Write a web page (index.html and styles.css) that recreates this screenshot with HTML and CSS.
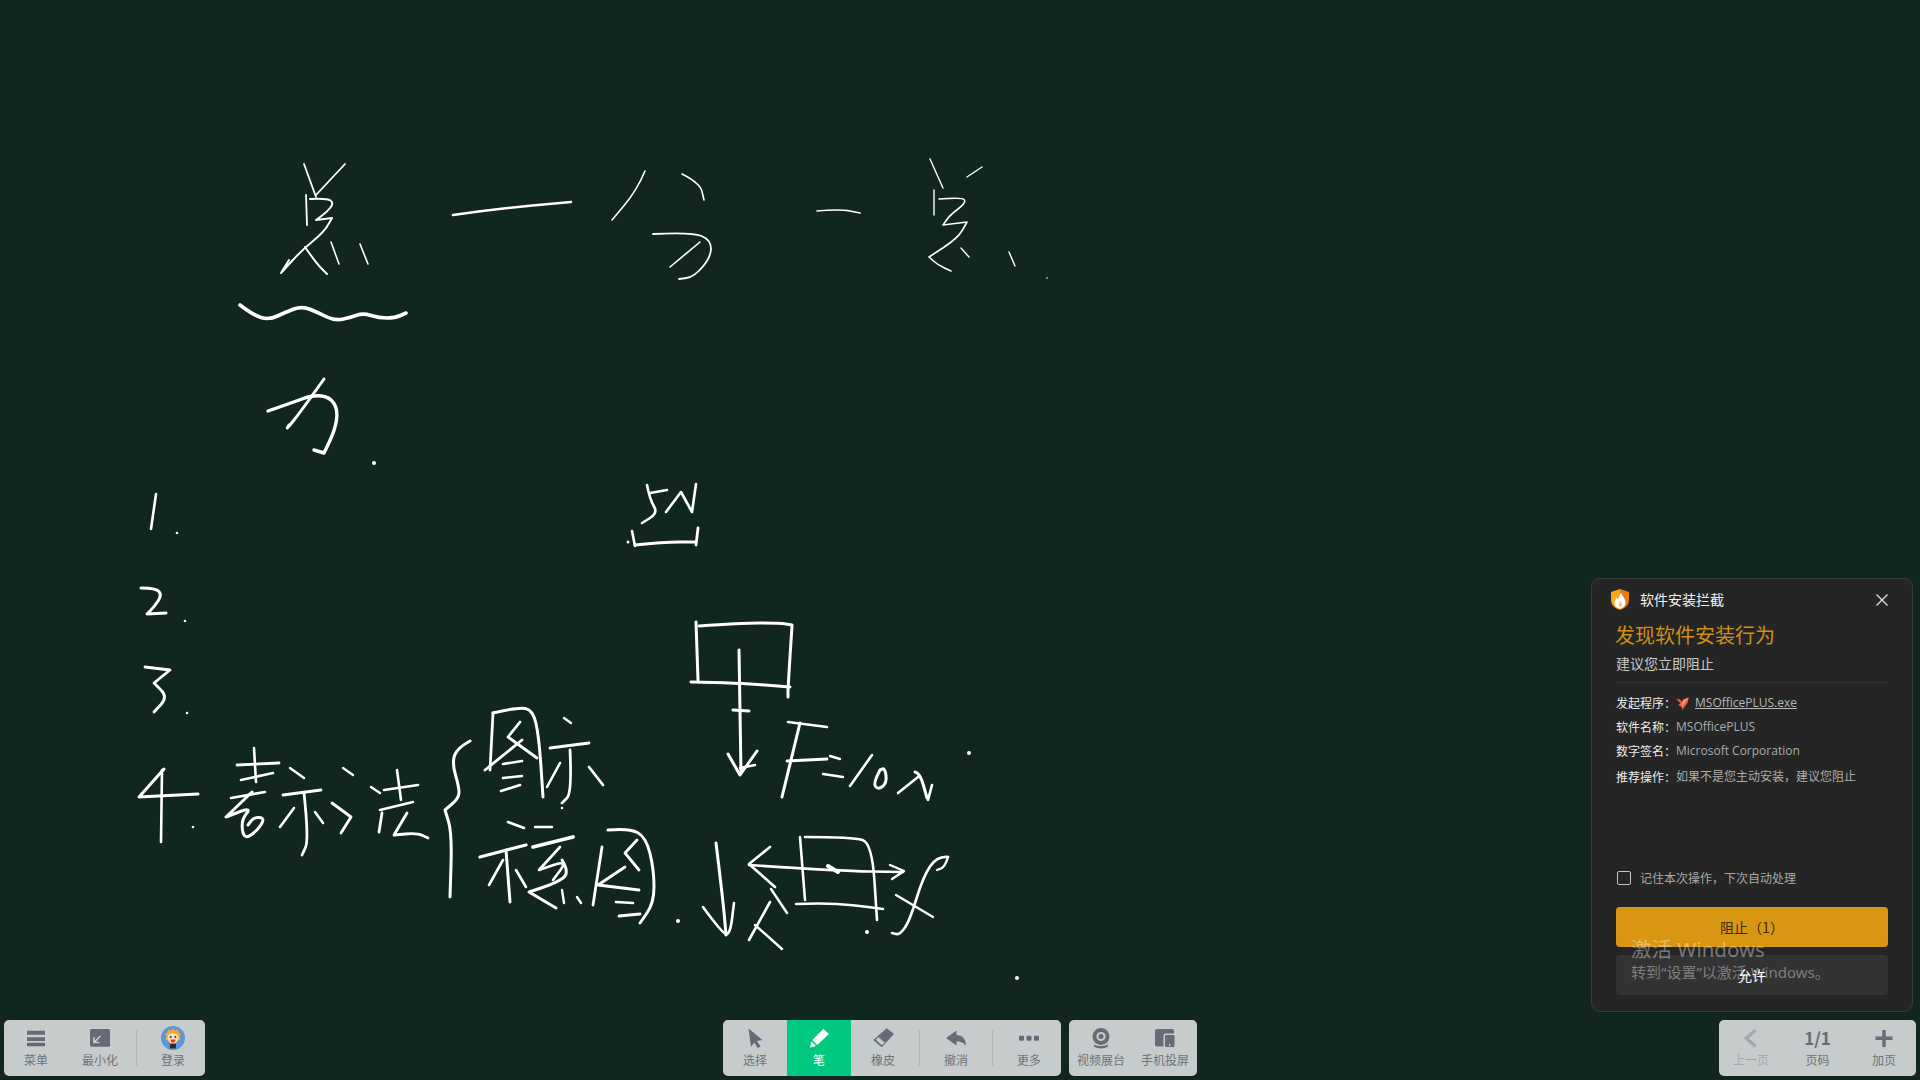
FILE: index.html
```html
<!DOCTYPE html>
<html lang="zh-CN">
<head>
    <meta charset="UTF-8">
    <title>白板</title>
    <link rel="stylesheet" href="styles.css">
</head>
<body>
    <main class="stage">
        <svg id="ink" class="ink" viewBox="0 0 1920 1024" width="1920" height="1024"></svg>

        <section class="popup">
            <div class="popup-head">
                <svg class="shield" viewBox="0 0 18 21" width="18" height="21">
                    <path d="M0 3 L9 0 V21 C4 19.500 0 16 0 11Z" fill="#f9a61a"/>
                    <path d="M18 3 L9 0 V21 C14 19.500 18 16 18 11Z" fill="#e57c0d"/>
                    <path d="M10 3.500 C11 7 14.500 9 14.500 13.500 C14.500 17 12 19.500 9 19.500 C6 19.500 3.500 17 3.500 13.800 C3.500 11.500 5 10 5.800 8.500 C6.400 9.500 6.800 10 7.300 10.300 C8 8 8.800 6 10 3.500Z" fill="#fff"/>
                    <path d="M9.500 12 C10.500 14 11.500 15 11 16.800 C10.500 18 8 18 7.500 16.500 C7.200 15 8.500 14 9.500 12Z" fill="#f9c98a"/>
                </svg>
                <span class="popup-title">软件安装拦截</span>
                <svg class="close" viewBox="0 0 12 12" width="12" height="12">
                    <path d="M0.500 0.500 L11.500 11.500 M11.500 0.500 L0.500 11.500" stroke="#e8e8e8" stroke-width="1.200" fill="none"/>
                </svg>
            </div>
            <h1 class="popup-heading">发现软件安装行为</h1>
            <p class="popup-sub">建议您立即阻止</p>
            <div class="info">
                <div class="info-row">
                    <span class="info-key">发起程序：</span>
                    <svg class="app-icon" viewBox="0 0 13 13" width="13" height="13">
                        <path d="M0 1.500 L4 2.500 L6 5 L7.500 2.500 L12.800 0.500 L11.500 6 L8.500 10 L6.500 13 L5.500 9.800 L2 8 L4.500 6.500Z" fill="#ee5b3f"/>
                        <path d="M6 5 L7.500 2.500 L12.800 0.500 L8.500 7 L5.500 9.800Z" fill="#f98a63"/>
                    </svg>
                    <a class="info-link">MSOfficePLUS.exe</a>
                </div>
                <div class="info-row"><span class="info-key">软件名称：</span><span class="info-val">MSOfficePLUS</span></div>
                <div class="info-row"><span class="info-key">数字签名：</span><span class="info-val">Microsoft Corporation</span></div>
                <div class="info-row info-last"><span class="info-key">推荐操作：</span><span class="info-val">如果不是您主动安装，建议您阻止</span></div>
            </div>
            <label class="remember"><span class="check"></span>记住本次操作，下次自动处理</label>
            <div class="btn btn-block">阻止（1）</div>
            <div class="btn btn-allow">允许</div>
        </section>

        <div class="watermark">
            <div class="wm-big">激活 Windows</div>
            <div class="wm-small">转到“设置”以激活 Windows。</div>
        </div>
    </main>

    <footer class="toolbar">
        <div class="tool-left">
            <div class="group">
                <div class="tool">
                    <svg class="icon" viewBox="0 0 24 24"><path d="M3 4.700h18v4H3zM3 11.300h18v3.700H3zM3 16.800h18v3.400H3z"/></svg>
                    <span>菜单</span>
                </div>
                <div class="tool">
                    <svg class="icon" viewBox="0 0 24 24">
                        <rect x="2" y="3" width="20" height="17.700" rx="1.500"/>
                        <path class="cut" d="M12.500 10 L6 16.500 M6 11.200 V16.500 H11.300"/>
                    </svg>
                    <span>最小化</span>
                </div>
                <i class="sep"></i>
                <div class="tool">
                    <svg class="icon" viewBox="0 0 24 24">
                        <circle cx="12" cy="12" r="12" fill="#5b96db"/>
                        <path d="M12 2 L14 4.500 L17 3.500 L17.500 6.500 L20 8 L18.500 10.500 L20 13.500 L17 14.500 L15 17 H9 L7 14.500 L4 13.500 L5.500 10.500 L4 8 L6.500 6.500 L7 3.500 L10 4.500Z" fill="#f6a435"/>
                        <ellipse cx="12" cy="12" rx="5.500" ry="4.800" fill="#fde3c0"/>
                        <circle cx="9.700" cy="11" r="1" fill="#3a2a20"/>
                        <circle cx="14.300" cy="11" r="1" fill="#3a2a20"/>
                        <path d="M9.500 13.500h5c0 2-1.200 3-2.500 3s-2.500-1-2.500-3z" fill="#d3392f"/>
                        <path d="M9 18h6v4.500H9z" fill="#2e2a2a"/>
                    </svg>
                    <span>登录</span>
                </div>
            </div>
        </div>

        <div class="tool-center">
            <div class="group">
                <div class="tool">
                    <svg class="icon" viewBox="0 0 24 24"><path d="M5.500 2.500 L19.500 14 L14 15 L17.500 20.500 L14.800 22 L11.200 16.500 L8 21Z"/></svg>
                    <span>选择</span>
                </div>
                <div class="tool tool-on">
                    <svg class="icon" viewBox="0 0 24 24"><path d="M16.300 3 L22 8 L10.300 19 L5.300 14ZM4.500 15.500 L9 20 L3 21.500Z"/></svg>
                    <span>笔</span>
                </div>
                <div class="tool">
                    <svg class="icon" viewBox="0 0 24 24">
                        <path d="M15.700 2.300 L23 8 L10.700 21.300 L2.300 14Z"/>
                        <path class="fill-bar" d="M4.700 13.800 L7.300 11 L14 16.700 L10.800 19.300Z"/>
                    </svg>
                    <span>橡皮</span>
                </div>
                <i class="sep"></i>
                <div class="tool">
                    <svg class="icon" viewBox="0 0 24 24"><path d="M2 12 L12.500 4.500 V9 C18 9 22 13 22 19.500 C19 16.500 16 15.300 12.500 15.300 V19.500Z"/></svg>
                    <span>撤消</span>
                </div>
                <i class="sep"></i>
                <div class="tool">
                    <svg class="icon" viewBox="0 0 24 24">
                        <rect x="2" y="9.700" width="5" height="5" rx="1"/>
                        <rect x="9.500" y="9.700" width="5" height="5" rx="1"/>
                        <rect x="17" y="9.700" width="5" height="5" rx="1"/>
                    </svg>
                    <span>更多</span>
                </div>
            </div>
            <div class="group">
                <div class="tool">
                    <svg class="icon" viewBox="0 0 24 24">
                        <circle cx="12" cy="10.500" r="8.500"/>
                        <circle class="fill-bar" cx="12" cy="10.500" r="4.600"/>
                        <circle cx="12" cy="10.500" r="2.500"/>
                        <path d="M5 18.500 C9 20.500 15 20.500 19 18.500 V20.500 C15 23 9 23 5 20.500Z"/>
                    </svg>
                    <span>视频展台</span>
                </div>
                <div class="tool">
                    <svg class="icon" viewBox="0 0 24 24">
                        <rect x="2" y="3" width="19" height="17.500" rx="2"/>
                        <rect class="fill-bar" x="10.500" y="7.500" width="12.500" height="14.500" rx="2"/>
                        <rect x="12" y="9" width="9.500" height="12" rx="1"/>
                        <circle cx="16.700" cy="19" r="0.800" fill="#fff"/>
                    </svg>
                    <span>手机投屏</span>
                </div>
            </div>
        </div>

        <div class="tool-right">
            <div class="group group-pages">
                <div class="tool tool-off">
                    <svg class="icon" viewBox="0 0 24 24"><path class="line" d="M16.500 4 L7.500 12.300 L16.500 20.500"/></svg>
                    <span>上一页</span>
                </div>
                <div class="tool">
                    <b class="pages">1/1</b>
                    <span>页码</span>
                </div>
                <div class="tool">
                    <svg class="icon" viewBox="0 0 24 24"><path class="line" d="M3.500 12.300 H20.500 M12 4 V21"/></svg>
                    <span>加页</span>
                </div>
            </div>
        </div>
    </footer>

    <script src="script.js"></script>
</body>
</html>
```

FILE: styles.css
```css
* {
    box-sizing: border-box;
}

body {
    margin: 0;
    width: 1920px;
    height: 1080px;
    overflow: hidden;
    display: flex;
    flex-direction: column;
    background-color: #11261f;
    font-family: "Noto Sans CJK SC", "Noto Sans", sans-serif;
}

.stage {
    position: relative;
    flex: 1;
}

.ink {
    position: absolute;
    left: 0;
    top: 0;
}

/* toolbar */
.toolbar {
    display: grid;
    grid-template-columns: 1fr auto 1fr;
    padding: 0 4px 4px;
}

.tool-left {
    display: flex;
    justify-content: flex-start;
}

.tool-center {
    display: flex;
    gap: 8px;
}

.tool-right {
    display: flex;
    justify-content: flex-end;
}

.group {
    display: flex;
    align-items: center;
    height: 56px;
    background-color: #c5cccb;
    border-radius: 5px;
    overflow: hidden;
}

.group-pages {
    width: 197px;
    justify-content: space-between;
}

.tool {
    width: 64px;
    height: 56px;
    padding-top: 6px;
    display: flex;
    flex-direction: column;
    align-items: center;
    font-size: 12px;
    line-height: 16px;
    color: #6f727c;
}

.tool-on {
    background-color: #00c97f;
    color: #fff;
}

.tool-on .icon {
    fill: #fff;
}

.tool-off {
    color: #a4a8ad;
}

.icon {
    width: 24px;
    height: 24px;
    margin-bottom: 2px;
    fill: #686a78;
    flex: none;
}

.cut {
    fill: none;
    stroke: #c5cccb;
    stroke-width: 1.700;
}

.fill-bar {
    fill: #c5cccb;
}

.line {
    fill: none;
    stroke: #686a78;
    stroke-width: 3.500;
}

.tool-off .line {
    stroke: #a4a8ad;
}

.pages {
    height: 24px;
    margin-bottom: 2px;
    font-size: 17px;
    line-height: 24px;
    color: #686a78;
}

.sep {
    width: 1px;
    height: 36px;
    margin: 0 4px;
    background-color: #aeb4b4;
}

/* install popup */
.popup {
    position: absolute;
    left: 1591px;
    top: 578px;
    width: 322px;
    height: 434px;
    padding: 10px 24px 16px;
    background-color: #252525;
    border: 1px solid #3a3d3c;
    border-radius: 9px;
    display: flex;
    flex-direction: column;
}

.popup-head {
    display: flex;
    align-items: center;
    height: 21px;
    margin-left: -5px;
}

.shield {
    flex: none;
}

.popup-title {
    margin-left: 11px;
    margin-bottom: 2px;
    font-size: 14px;
    color: #f2f2f2;
}

.close {
    margin-left: auto;
}

.popup-heading {
    margin: 11px 0 0 -1px;
    font-size: 20px;
    font-weight: 400;
    line-height: 28px;
    color: #d18f12;
}

.popup-sub {
    margin: 4px 0 0;
    padding-bottom: 9px;
    font-size: 14px;
    line-height: 20px;
    color: #c9c9c9;
    border-bottom: 1px solid #343434;
}

.info {
    margin-top: 6px;
    font-family: "Open Sans", "Noto Sans CJK SC", sans-serif;
    font-size: 12px;
    line-height: 20px;
}

.info-row {
    display: flex;
    align-items: center;
    margin-top: 4px;
}

.info-last {
    margin-top: 6px;
}

.info-key {
    font-family: "Noto Sans CJK TC", sans-serif;
    color: #ececec;
}

.info-val {
    color: #a9adb1;
}

.app-icon {
    margin: 0 6px 0 0;
}

.info-link {
    color: #b4b8bc;
    text-decoration: underline;
}

.remember {
    display: flex;
    align-items: center;
    margin-top: auto;
    font-size: 12px;
    color: #a9a9a9;
}

.check {
    width: 14px;
    height: 14px;
    margin-right: 9px;
    margin-left: 1px;
    border: 1px solid #c4c4c4;
    border-radius: 2px;
}

.btn {
    height: 40px;
    border-radius: 4px;
    display: flex;
    align-items: center;
    justify-content: center;
    font-size: 14px;
}

.btn-block {
    margin-top: 21px;
    background-color: #d99613;
    color: #3a2a08;
}

.btn-allow {
    margin-top: 8px;
    background-color: #333333;
    color: #fff;
}

.watermark {
    position: absolute;
    left: 1631px;
    top: 933px;
    font-family: "Noto Sans", "Noto Sans CJK SC", sans-serif;
    color: rgba(255, 255, 255, 0.38);
    pointer-events: none;
}

.wm-big {
    font-size: 20.500px;
    line-height: 32px;
}

.wm-small {
    margin-top: -4px;
    font-size: 15px;
    line-height: 22px;
}
```

FILE: script.js
```js
// 白板笔迹: [线宽, 点, 点, ...], 点写成 x,y
const strokes = [
    // 总 一 分 一 点
    [1.8, 304,164, 316,197], [1.8, 345,164, 316,195], [1.8, 306,195, 307,225],
    [2, 310,199, 327,198, 334,203, 327,212, 316,220, 316,220, 332,218, 332,218, 324,232, 302,250, 281,273, 281,273, 289,260],
    [2, 305,247, 316,263, 327,274], [1.6, 331,242, 339,264], [1.6, 360,244, 368,264],
    [2.6, 453,215, 494,209, 571,202],
    [1.6, 645,171, 637,190, 612,220], [1.6, 682,174, 700,183, 704,200],
    [1.8, 653,234, 692,232, 711,240, 711,257, 694,277, 679,279], [1.6, 700,242, 670,267],
    [1.6, 817,211, 840,209, 860,213],
    [1.4, 930,159, 943,188], [1.4, 982,167, 967,177], [1.4, 934,190, 934,215],
    [1.6, 939,199, 963,197, 966,203, 950,215, 943,225, 943,225, 967,222, 967,222, 958,238, 929,257, 929,257, 938,265, 951,271],
    [1.4, 961,248, 969,257], [1.4, 1009,252, 1015,266],
    // 波浪线
    [3.6, 240,305, 253,315, 269,320, 286,312, 302,306, 319,313, 335,321, 352,317, 363,313, 379,318, 395,318, 406,313],
    // 力
    [3.4, 268,411, 291,403, 313,395, 330,397, 338,410, 335,430, 324,453, 324,453, 314,450],
    [3, 324,379, 302,410, 286,430, 289,425],
    // 1 2 3 4
    [2.6, 156,494, 151,529],
    [3, 141,588, 156,588, 162,595, 154,607, 147,614, 147,614, 166,613],
    [2.8, 145,667, 145,667, 170,670, 170,670, 154,683, 154,683, 168,697, 154,712],
    [3, 164,769, 164,769, 139,797, 139,797, 198,794], [2.6, 162,770, 161,842],
    // 表
    [2.8, 237,765, 279,763], [2.6, 254,748, 256,782], [2.6, 241,780, 273,773], [2.6, 231,798, 265,792],
    [3, 252,792, 226,817, 226,817, 252,807, 241,820, 244,840, 258,830, 265,818, 254,817, 248,825],
    // 示
    [2.4, 290,768, 304,778], [2.8, 283,795, 321,790], [2.8, 304,793, 309,840, 302,855],
    [2.6, 294,808, 280,827], [2.6, 315,812, 323,823],
    [2.4, 343,768, 353,775], [2.8, 332,803, 351,817, 351,817, 341,833],
    // 法
    [2.4, 371,787, 380,793], [2.8, 382,813, 379,832], [2.6, 397,770, 401,800],
    [2.6, 384,790, 418,785], [2.6, 380,810, 413,802],
    [2.8, 407,813, 394,835, 394,835, 417,833, 428,838],
    // 大括号
    [3, 470,741, 457,748, 452,763, 459,787, 459,798, 445,810, 445,810, 452,833, 450,897],
    // 图示
    [3, 493,713, 518,707, 533,710, 539,737, 543,797], [2.8, 493,713, 490,770],
    [2.8, 520,722, 508,737, 508,737, 537,758], [2.8, 522,740, 485,770],
    [2.6, 522,761, 503,764], [2.6, 522,776, 503,778], [2.6, 520,785, 501,791],
    [2.4, 564,718, 571,723], [2.8, 550,748, 589,743], [2.8, 570,750, 572,793, 562,803],
    [2.6, 560,763, 547,787], [2.8, 589,767, 603,785],
    // 示意图
    [2.6, 508,822, 524,828], [3.2, 480,857, 526,845], [3, 506,850, 510,902],
    [2.6, 503,860, 489,885], [2.6, 516,870, 526,887],
    [2.4, 535,827, 552,827], [3.8, 533,847, 573,837],
    [2.6, 560,847, 539,870, 539,870, 568,860, 553,880],
    [3, 562,860, 570,873, 556,883, 529,892, 529,892, 556,908],
    [2.4, 562,890, 564,903], [2.4, 577,897, 581,903],
    [3, 608,830, 629,828, 646,837, 654,870, 654,903, 640,923],
    [2.8, 602,847, 593,905], [2.8, 637,840, 625,853, 625,853, 639,870],
    [2.8, 625,867, 598,885, 598,885, 639,890], [2.6, 633,903, 616,902], [2.8, 640,914, 619,916],
    // 5N
    [2.6, 647,485, 650,500, 658,513, 642,523], [2.6, 650,493, 667,490],
    [2.6, 666,512, 681,492, 681,492, 692,512, 692,512, 696,484],
    [2.6, 632,531, 635,546], [2.8, 635,545, 663,542, 696,542], [2.8, 698,528, 696,545],
    // 方块和 F=10N
    [3, 696,622, 698,680], [2.8, 699,626, 740,623, 780,623, 792,625],
    [3, 792,626, 788,687, 788,697], [3, 691,682, 740,683, 790,687],
    [3, 739,650, 741,773], [3, 733,710, 749,711],
    [3, 728,754, 740,775, 740,775, 757,751], [2.4, 740,768, 755,765],
    [2.6, 788,722, 827,727], [3, 800,723, 782,797], [2.8, 787,761, 827,759],
    [2.4, 830,756, 840,759], [2.4, 823,774, 843,777], [2.6, 872,755, 850,786],
    [3, 880,770, 873,783, 878,790, 887,783, 885,768, 880,770],
    [3, 915,772, 920,773, 927,798], [2.6, 918,777, 898,793], [2.6, 932,785, 928,800],
    // 受力分析
    [3, 716,843, 723,900, 726,935], [2.6, 703,907, 722,933, 730,935, 734,903],
    [2.6, 800,837, 805,900], [2.6, 805,837, 853,837, 872,843, 877,920],
    [2.6, 796,904, 820,903, 853,905, 883,909],
    [2.6, 770,847, 749,864, 749,864, 775,887], [2.6, 749,865, 837,871, 903,872], [4, 828,866, 838,872],
    [2.4, 890,865, 904,871, 904,871, 892,879],
    [2.4, 771,889, 787,913], [2.6, 770,902, 749,940], [2.4, 755,925, 782,949],
    [2.6, 948,857, 937,856, 923,877, 910,920, 900,935, 892,933], [2.4, 948,857, 945,867, 937,870],
    [2.4, 896,895, 933,917],
];

// 小圆点: [x, y, 半径]
const dots = [
    [374,463,2], [1047,278,0.8], [177,533,1.3], [185,621,1.3], [187,713,1.3], [193,827,1.3],
    [562,808,1.3], [678,921,2], [969,753,2], [867,932,2], [1017,978,2], [628,542,1.5],
];

const ink = document.getElementById('ink');
const NS = 'http://www.w3.org/2000/svg';

function smoothPath(pts) {
    // 用中点连二次曲线，重复的点就是尖角
    let d = 'M' + pts[0] + ' ' + pts[1];
    if (pts.length === 4) return d + 'L' + pts[2] + ' ' + pts[3];
    for (let i = 2; i < pts.length - 2; i += 2) {
        const mx = (pts[i] + pts[i + 2]) / 2;
        const my = (pts[i + 1] + pts[i + 3]) / 2;
        d += 'Q' + pts[i] + ' ' + pts[i + 1] + ' ' + mx + ' ' + my;
    }
    return d + 'L' + pts[pts.length - 2] + ' ' + pts[pts.length - 1];
}

strokes.forEach(function (s) {
    const p = document.createElementNS(NS, 'path');
    p.setAttribute('d', smoothPath(s.slice(1)));
    p.setAttribute('fill', 'none');
    p.setAttribute('stroke', '#fff');
    p.setAttribute('stroke-width', s[0]);
    p.setAttribute('stroke-linecap', 'round');
    p.setAttribute('stroke-linejoin', 'round');
    ink.appendChild(p);
});

dots.forEach(function (c) {
    const el = document.createElementNS(NS, 'circle');
    el.setAttribute('cx', c[0]);
    el.setAttribute('cy', c[1]);
    el.setAttribute('r', c[2]);
    el.setAttribute('fill', '#fff');
    ink.appendChild(el);
});
```
